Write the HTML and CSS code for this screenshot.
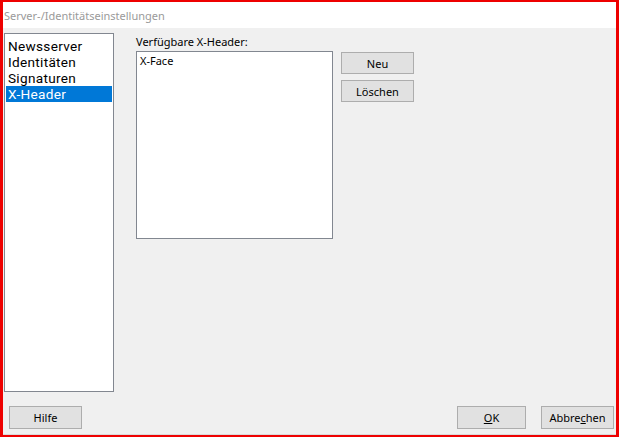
FILE: index.html
```html
<!DOCTYPE html>
<html lang="de">
<head>
  <meta charset="UTF-8">
  <title>Server-/Identitätseinstellungen</title>
  <link rel="stylesheet" href="styles.css">
</head>
<body>
  <div class="window">
    <div class="titlebar">Server-/Identitätseinstellungen</div>
    <div class="content">
      <div class="main">
        <ul class="nav-list">
          <li>Newsserver</li>
          <li>Identitäten</li>
          <li>Signaturen</li>
          <li class="selected">X-Header</li>
        </ul>
        <div class="panel">
          <div class="panel-label">Verfügbare X-Header:</div>
          <div class="panel-row">
            <ul class="header-list">
              <li>X-Face</li>
            </ul>
            <div class="side-buttons">
              <button>Neu</button>
              <button>Löschen</button>
            </div>
          </div>
        </div>
      </div>
      <div class="footer">
        <button>Hilfe</button>
        <div class="footer-right">
          <button class="btn-ok"><u>O</u>K</button>
          <button>Abbre<u>c</u>hen</button>
        </div>
      </div>
    </div>
  </div>
</body>
</html>
```

FILE: styles.css
```css
html, body {
  margin: 0;
  padding: 0;
  background: #ffffff;
}
body {
  font-family: "Segoe UI", "Noto Sans", "Open Sans", sans-serif;
  font-size: 11px;
  color: #000;
}
.window {
  width: 619px;
  height: 437px;
  box-sizing: border-box;
  border: 3px solid #ee0000;
  border-top-width: 2px;
  border-bottom-width: 4px;
  display: flex;
  flex-direction: column;
}
.titlebar {
  height: 26px;
  line-height: 27px;
  padding-left: 1px;
  background: #ffffff;
  color: #9a9a9a;
  font-size: 11px;
}
.content {
  flex: 1;
  background: #f0f0f0;
  padding: 5px 2px 5px 1px;
  display: flex;
  flex-direction: column;
  border-bottom: 1px solid #dadada;
}
.main {
  display: flex;
  gap: 22px;
}
.nav-list {
  list-style: none;
  margin: 0;
  padding: 4px 1px 0 1px;
  width: 106px;
  height: 353px;
  background: #ffffff;
  border: 1px solid #828790;
  font-family: Roboto, "Noto Sans", sans-serif;
  font-size: 13.6px;
  letter-spacing: 0.3px;
}
.nav-list li {
  height: 16px;
  line-height: 16px;
  padding-left: 2px;
}
.nav-list li.selected {
  background: #0078d7;
  color: #ffffff;
}
.panel-label {
  height: 17px;
  line-height: 15px;
  padding-top: 1px;
}
.panel-row {
  display: flex;
  gap: 8px;
}
.header-list {
  list-style: none;
  margin: 0;
  padding: 1px 3px;
  width: 189px;
  height: 184px;
  background: #ffffff;
  border: 1px solid #828790;
}
.header-list li {
  line-height: 15px;
}
.side-buttons {
  display: flex;
  flex-direction: column;
  gap: 6px;
  padding-top: 1px;
}
button {
  font-family: inherit;
  font-size: 11px;
  width: 73px;
  height: 22px;
  padding: 0;
  background: #e1e1e1;
  border: 1px solid #adadad;
  color: #000;
}
.footer {
  margin-top: 14px;
  display: flex;
  justify-content: space-between;
  padding-left: 5px;
}
.footer button {
  height: 23px;
}
.footer-right {
  display: flex;
  gap: 15px;
}
.footer .btn-ok {
  width: 69px;
}
```
